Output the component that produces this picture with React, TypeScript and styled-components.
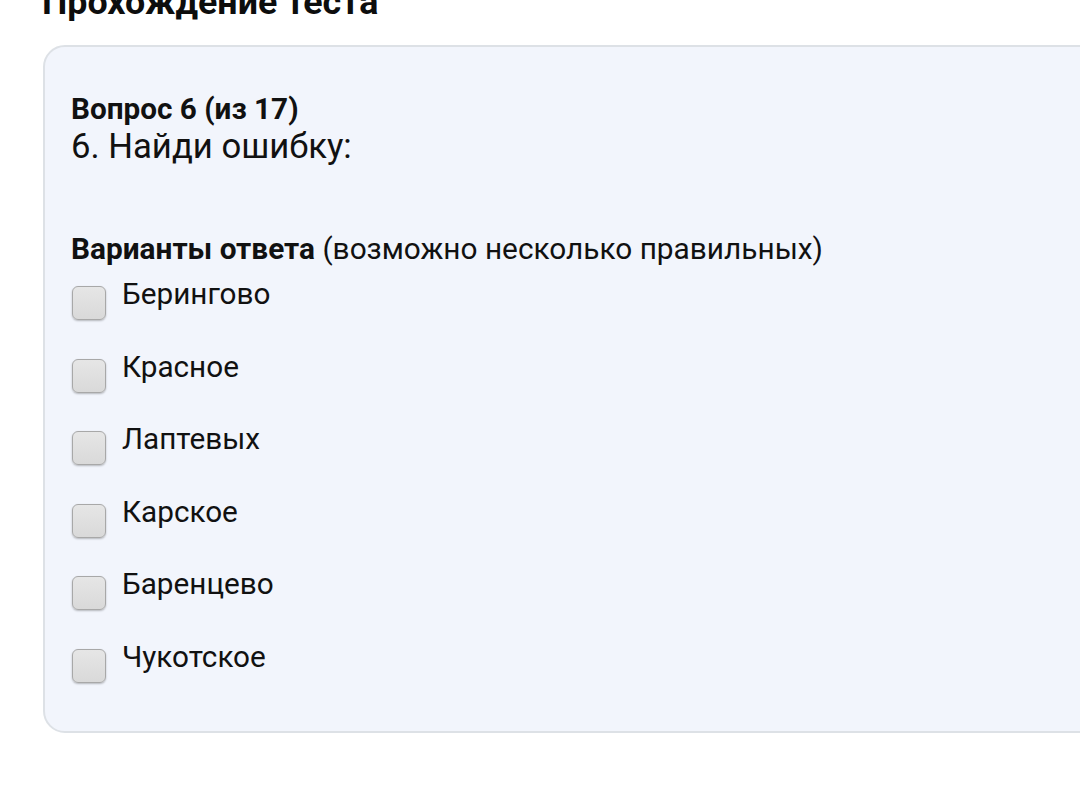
import React from "react";
import styled, { createGlobalStyle } from "styled-components";

const Global = createGlobalStyle`
  html, body {
    margin: 0;
    padding: 0;
    background: #ffffff;
    overflow: hidden;
  }
  body {
    font-family: Roboto, "Noto Sans", "Liberation Sans", sans-serif;
    color: #111111;
  }
`;

const Page = styled.div`
  width: 1080px;
  height: 797px;
  overflow: hidden;
  padding-left: 42px;
  box-sizing: border-box;
`;

const Title = styled.h1`
  margin: -17px 0 0 0;
  font-size: 35.8px;
  line-height: 38px;
  font-weight: 700;
  color: #0d0d0d;
`;

const Card = styled.section`
  margin-top: 24px;
  margin-left: 1px;
  width: 1100px;
  height: 688px;
  box-sizing: border-box;
  background: #f2f5fc;
  border: 2px solid #dde1e6;
  border-radius: 22px;
  padding: 46px 0 0 26px;
`;

const QuestionNumber = styled.div`
  font-size: 29.7px;
  line-height: 32px;
  font-weight: 700;
`;

const QuestionText = styled.div`
  font-size: 34.7px;
  line-height: 40px;
  font-weight: 400;
  padding-top: 1px;
`;

const AnswersHeader = styled.div`
  margin-top: 67px;
  font-size: 29.8px;
  line-height: 32px;

  b {
    font-weight: 700;
  }
`;

const Options = styled.ul`
  list-style: none;
  margin: 13px 0 0 0;
  padding: 0;
`;

const Option = styled.li`
  display: flex;
  align-items: flex-start;
  gap: 16px;
  height: 72.5px;
  font-size: 29.7px;
  line-height: 32px;
`;

const Box = styled.span`
  flex: none;
  width: 34px;
  height: 34px;
  margin-top: 8px;
  margin-left: 1px;
  box-sizing: border-box;
  border: 1.5px solid #a8a8a8;
  border-radius: 6px;
  background: linear-gradient(#e6e6e6, #d9d9d9);
  box-shadow: 0 1px 2px rgba(0, 0, 0, 0.25);
`;

const options = ["Берингово", "Красное", "Лаптевых", "Карское", "Баренцево", "Чукотское"];

export default function App() {
  return (
    <>
      <Global />
      <Page>
        <Title>Прохождение теста</Title>
        <Card>
          <QuestionNumber>Вопрос 6 (из 17)</QuestionNumber>
          <QuestionText>6. Найди ошибку:</QuestionText>
          <AnswersHeader>
            <b>Варианты ответа</b> (возможно несколько правильных)
          </AnswersHeader>
          <Options>
            {options.map((o) => (
              <Option key={o}>
                <Box />
                <span>{o}</span>
              </Option>
            ))}
          </Options>
        </Card>
      </Page>
    </>
  );
}
